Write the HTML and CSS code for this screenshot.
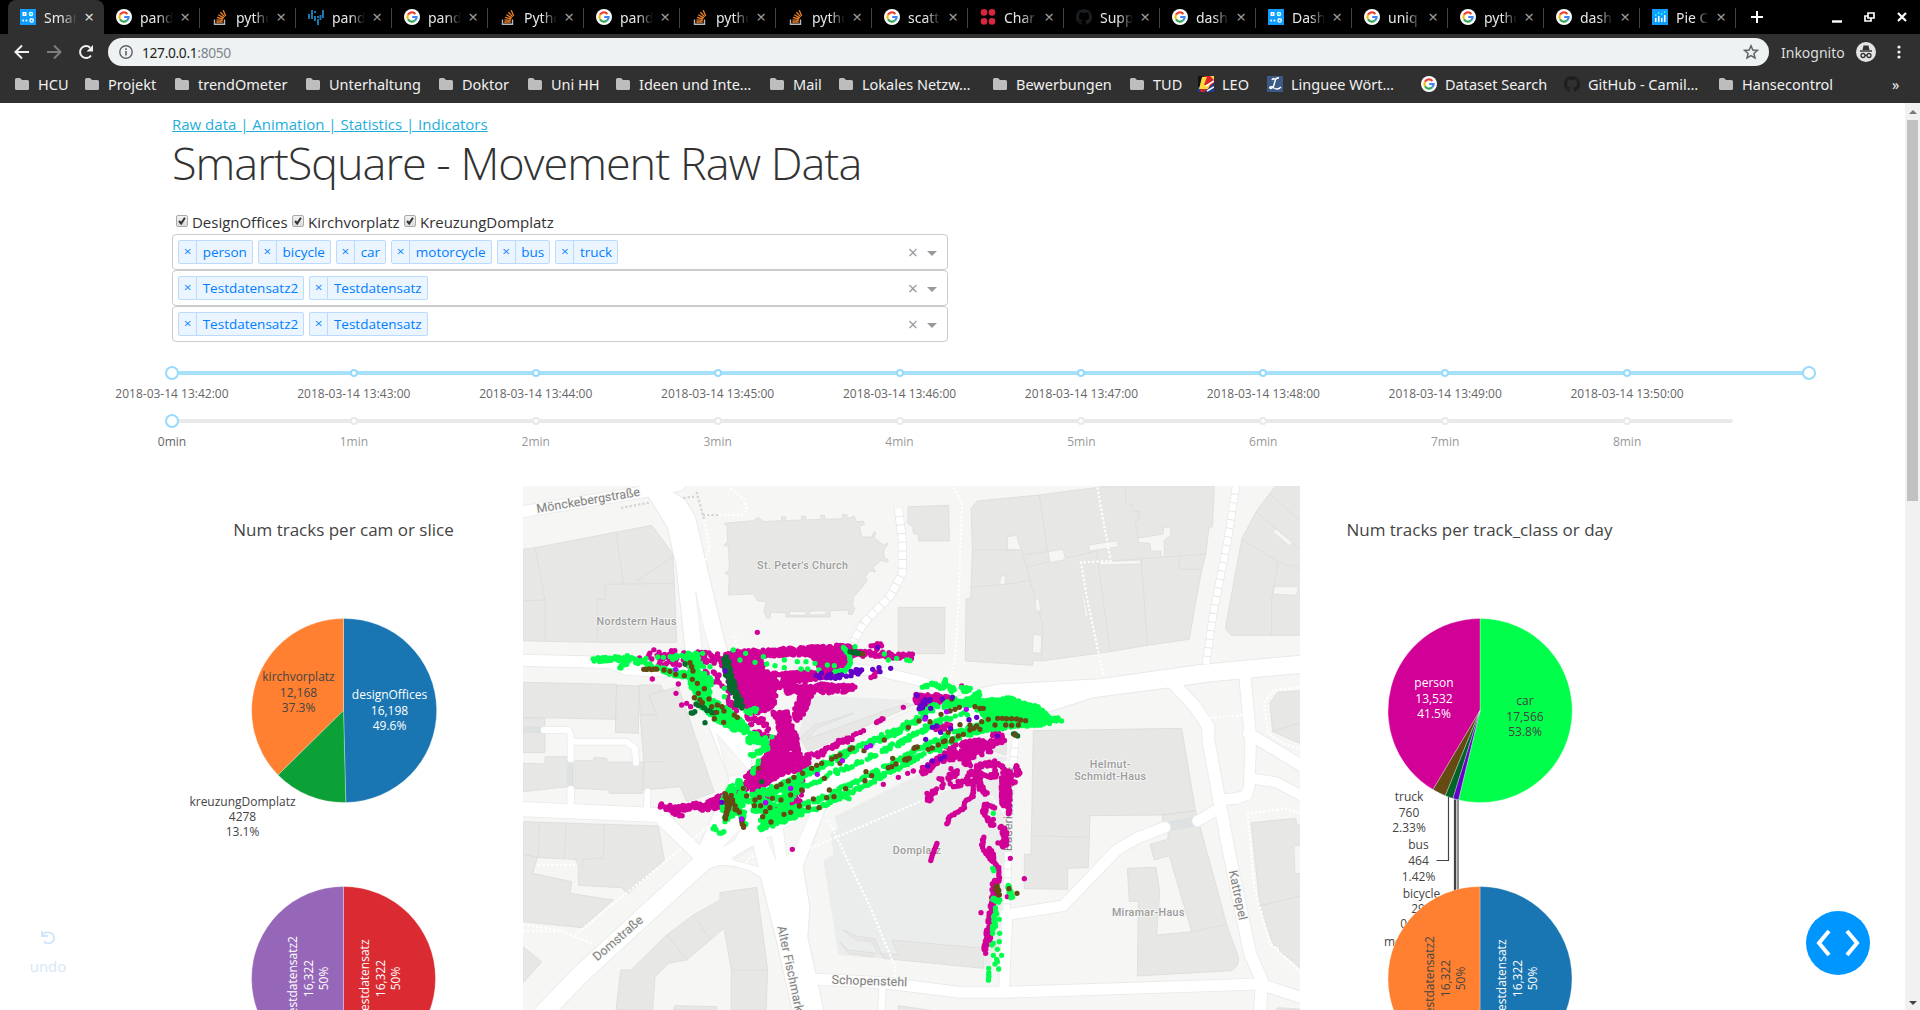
FILE: index.html
```html
<!DOCTYPE html>
<html lang="en">
<head>
<meta charset="utf-8">
<title>SmartSquare</title>
<link rel="stylesheet" href="styles.css">
</head>
<body>
<svg class="defs" aria-hidden="true">
  <symbol id="google" viewBox="0 0 16 16"><circle cx="8" cy="8" r="8" fill="#fff"/><g fill="none" stroke-width="2.2"><path d="M11.4 4.9A4.6 4.6 0 0 0 4 5.8" stroke="#ea4335"/><path d="M4 5.8a4.6 4.6 0 0 0 0 4.5" stroke="#fbbc05"/><path d="M4 10.3a4.6 4.6 0 0 0 7.2 1" stroke="#34a853"/><path d="M11.2 11.3A4.6 4.6 0 0 0 12.6 8H8.2" stroke="#4285f4"/></g></symbol>
  <symbol id="stack" viewBox="0 0 16 16"><path d="M2.500 10.500v4.700h10v-4.700" fill="none" stroke="#bcbbbb" stroke-width="1.400"/><g stroke="#f48024" stroke-width="1.300"><path d="M4.300 13h6.400M4.400 10.800l6.300.6M5 8.300l6.100 1.700M6.300 5.700l5.500 3.200M8.400 3.200l4.300 4.700M11.200 1.200l2.500 5.900"/></g></symbol>
  <symbol id="pandas" viewBox="0 0 16 16"><g fill="#1b78ac"><path d="M0 5h2v5H0zM3 1h2v9H3zM6 7h2v5H6zM6 2h2v2H6zM9 10h2v6H9zM9 7h2v2H9zM11.500 6h2v5h-2zM14 1h2v8h-2z"/></g></symbol>
  <symbol id="dash" viewBox="0 0 16 16"><path d="M0 0h16v16H0z" fill="#119dff"/><g fill="#fff"><path d="M2.500 3h4v4h-4z"/><circle cx="11" cy="5" r="2.300"/><circle cx="3.200" cy="11.500" r="1"/><circle cx="6.500" cy="11.500" r="1"/><circle cx="11.600" cy="11.400" r="2.300"/></g><circle cx="11" cy="5" r="1.300" fill="#25fefd"/><circle cx="11.600" cy="11.400" r="1" fill="#119dff"/><path d="M4 4.400h1v1.200H4z" fill="#119dff"/></symbol>
  <symbol id="plotly" viewBox="0 0 16 16"><path d="M0 0h16v16H0z" fill="#119dff"/><path d="M3 9h1.500v4H3zM6 7h1.500v6H6zM9 9h1.500v4H9zM12 6h1.500v7H12z" fill="#fff"/><g fill="#25fefd"><circle cx="3.700" cy="6" r=".9"/><circle cx="6.700" cy="4" r=".9"/><circle cx="9.700" cy="5" r=".9"/><circle cx="12.700" cy="3" r=".9"/></g></symbol>
  <symbol id="reddots" viewBox="0 0 16 16"><g fill="#d6273f"><circle cx="4" cy="3.400" r="3.300"/><circle cx="12" cy="3.400" r="3.300"/><circle cx="4" cy="12.400" r="3.300"/><circle cx="12" cy="12.400" r="3.300"/></g></symbol>
  <symbol id="github" viewBox="0 0 16 16"><path fill="#1b1f22" d="M8 0C3.58 0 0 3.58 0 8c0 3.54 2.29 6.53 5.47 7.59.4.07.55-.17.55-.38v-1.49c-2.01.37-2.53-.49-2.69-.94-.36-.9-.9-1.2-.9-1.2-.7-.5.1-.5.1-.5.8.1 1.2.8 1.2.8.72 1.21 1.87.87 2.33.66.07-.52.28-.87.51-1.07-1.78-.2-3.64-.89-3.64-3.95 0-.87.31-1.59.82-2.15-.08-.2-.36-1.02.08-2.12 0 0 .67-.21 2.2.82a7.6 7.6 0 0 1 4 0c1.53-1.04 2.2-.82 2.2-.82.44 1.1.16 1.92.08 2.12.51.56.82 1.27.82 2.15 0 3.07-1.87 3.75-3.65 3.95.29.25.54.73.54 1.48v2.2c0 .21.15.46.55.38A8 8 0 0 0 16 8c0-4.42-3.58-8-8-8z"/></symbol>
  <symbol id="folder" viewBox="0 0 16 16"><path d="M1 3.500Q1 2 2.500 2H6l2 2h5.500q1.500 0 1.500 1.500v7q0 1.500-1.500 1.500h-11Q1 14 1 12.500z" fill="#bdbdbd"/></symbol>
  <symbol id="leo" viewBox="0 0 16 16"><path d="M0 0h16v16H0z" fill="#1c3d94"/><path d="M0 0h9L2 11H0z" fill="#111"/><path d="M6 0h10v7L6 16H2z" fill="#d8232a"/><path d="M4 1h5L6 9h6l-2 4H1z" fill="#ffd83b"/><path d="M8 10l8-5M9 15l7-4" stroke="#fff" stroke-width="1.500"/><path d="M12 0h4v4z" fill="#ffd83b"/></symbol>
  <symbol id="linguee" viewBox="0 0 16 16"><path d="M0 0h16v16H0z" fill="#3d5a86"/><path d="M12 2C8 1 8 6 7 9s-3 4-4 3 1-2 4 0 5 1 7-1M5 4q1-2 3-1" fill="none" stroke="#fff" stroke-width="1.500"/></symbol>
</svg>

<header class="browser">
  <div class="tabs">
    <div class="tab active"><svg><use href="#dash"/></svg><span>Smart</span><i>×</i></div>
    <div class="tab"><svg><use href="#google"/></svg><span>panda</span><i>×</i></div>
    <div class="tab"><svg><use href="#stack"/></svg><span>pytho</span><i>×</i></div>
    <div class="tab"><svg><use href="#pandas"/></svg><span>panda</span><i>×</i></div>
    <div class="tab"><svg><use href="#google"/></svg><span>panda</span><i>×</i></div>
    <div class="tab"><svg><use href="#stack"/></svg><span>Pytho</span><i>×</i></div>
    <div class="tab"><svg><use href="#google"/></svg><span>panda</span><i>×</i></div>
    <div class="tab"><svg><use href="#stack"/></svg><span>pytho</span><i>×</i></div>
    <div class="tab"><svg><use href="#stack"/></svg><span>pytho</span><i>×</i></div>
    <div class="tab"><svg><use href="#google"/></svg><span>scatt</span><i>×</i></div>
    <div class="tab"><svg><use href="#reddots"/></svg><span>Char</span><i>×</i></div>
    <div class="tab"><svg><use href="#github"/></svg><span>Supp</span><i>×</i></div>
    <div class="tab"><svg><use href="#google"/></svg><span>dash</span><i>×</i></div>
    <div class="tab"><svg><use href="#dash"/></svg><span>Dash</span><i>×</i></div>
    <div class="tab"><svg><use href="#google"/></svg><span>uniq</span><i>×</i></div>
    <div class="tab"><svg><use href="#google"/></svg><span>pytho</span><i>×</i></div>
    <div class="tab"><svg><use href="#google"/></svg><span>dash</span><i>×</i></div>
    <div class="tab"><svg><use href="#plotly"/></svg><span>Pie C</span><i>×</i></div>
    <svg class="window" viewBox="0 0 184 34"><g stroke="#fff" fill="none" stroke-width="2"><path d="M21 11v12M15 17h12"/><path d="M96 21.500h10" stroke-width="2.400"/><path d="M132 13h6v5h-6zM132 16h-3v5h6v-3" stroke-width="1.700"/><path d="M162 13l8 8M170 13l-8 8" stroke-width="2.200"/></g></svg>
  </div>
  <div class="toolbar">
    <svg class="nav" viewBox="0 0 108 36"><g fill="none" stroke-width="2"><path d="M29 18H16M22 11.500L15.500 18l6.500 6.500" stroke="#f1f1f1"/><path d="M47 18h13M54 11.500l6.500 6.500-6.500 6.500" stroke="#7d7d7d"/><path d="M91 21.500a6 6 0 1 1-.8-7.800" stroke="#f1f1f1"/></g><path d="M93 11v6.500h-6.500z" fill="#f1f1f1"/></svg>
    <div class="omnibox">
      <svg width="14" height="14" viewBox="0 0 14 14"><circle cx="7" cy="7" r="6.200" fill="none" stroke="#5f6368" stroke-width="1.400"/><path d="M7 6v4.500M7 3.300V5" stroke="#5f6368" stroke-width="1.600"/></svg>
      <span class="url">127.0.0.1<em>:8050</em></span>
      <svg width="16" height="16" viewBox="0 0 16 16"><path d="M8 1.800l1.800 4.200 4.600.4-3.500 3 1.100 4.500L8 11.500l-4 2.400 1.100-4.500-3.500-3L6.200 6z" fill="none" stroke="#5f6368" stroke-width="1.500"/></svg>
    </div>
    <span class="incog">Inkognito</span>
    <svg width="20" height="20" viewBox="0 0 20 20"><circle cx="10" cy="10" r="10" fill="#e4e4e4"/><path d="M6.500 8l1-4.500h5l1 4.500zM4 8.300h12v1.400H4z" fill="#333"/><g fill="none" stroke="#333" stroke-width="1.300"><circle cx="7" cy="13.500" r="2"/><circle cx="13" cy="13.500" r="2"/><path d="M9 13.300h2"/></g></svg>
    <svg class="more" width="6" height="16" viewBox="0 0 6 16"><g fill="#f1f1f1"><circle cx="3" cy="3" r="1.600"/><circle cx="3" cy="8" r="1.600"/><circle cx="3" cy="13" r="1.600"/></g></svg>
  </div>
  <nav class="bookmarks">
    <a><svg><use href="#folder"/></svg>HCU</a>
    <a><svg><use href="#folder"/></svg>Projekt</a>
    <a><svg><use href="#folder"/></svg>trendOmeter</a>
    <a><svg><use href="#folder"/></svg>Unterhaltung</a>
    <a><svg><use href="#folder"/></svg>Doktor</a>
    <a><svg><use href="#folder"/></svg>Uni HH</a>
    <a><svg><use href="#folder"/></svg>Ideen und Inte…</a>
    <a><svg><use href="#folder"/></svg>Mail</a>
    <a><svg><use href="#folder"/></svg>Lokales Netzw…</a>
    <a><svg><use href="#folder"/></svg>Bewerbungen</a>
    <a><svg><use href="#folder"/></svg>TUD</a>
    <a><svg><use href="#leo"/></svg>LEO</a>
    <a><svg><use href="#linguee"/></svg>Linguee Wört…</a>
    <a><svg><use href="#google"/></svg>Dataset Search</a>
    <a><svg><use href="#github"/></svg>GitHub - Camil…</a>
    <a><svg><use href="#folder"/></svg>Hansecontrol</a>
    <a>»</a>
  </nav>
</header>

<div class="view">
<main>
  <div class="inset">
    <a class="links">Raw data | Animation | Statistics | Indicators</a>
    <h1>SmartSquare - Movement Raw Data</h1>
    <div class="checks">
      <label><svg class="box" viewBox="0 0 12 12"><path d="M2.500 6l2.500 3 4.500-7"/></svg>DesignOffices</label>
      <label><svg class="box" viewBox="0 0 12 12"><path d="M2.500 6l2.500 3 4.500-7"/></svg>Kirchvorplatz</label>
      <label><svg class="box" viewBox="0 0 12 12"><path d="M2.500 6l2.500 3 4.500-7"/></svg>KreuzungDomplatz</label>
    </div>
    <div class="select"><span class="tag"><b>×</b>person</span><span class="tag"><b>×</b>bicycle</span><span class="tag"><b>×</b>car</span><span class="tag"><b>×</b>motorcycle</span><span class="tag"><b>×</b>bus</span><span class="tag"><b>×</b>truck</span><i class="clear">×</i><i class="caret"></i></div>
    <div class="select"><span class="tag"><b>×</b>Testdatensatz2</span><span class="tag"><b>×</b>Testdatensatz</span><i class="clear">×</i><i class="caret"></i></div>
    <div class="select"><span class="tag"><b>×</b>Testdatensatz2</span><span class="tag"><b>×</b>Testdatensatz</span><i class="clear">×</i><i class="caret"></i></div>
  </div>
  <div class="sliders">
    <div class="slider range">
      <div class="rail"></div>
      <div class="marks">
        <div class="handle">2018-03-14 13:42:00</div><div>2018-03-14 13:43:00</div><div>2018-03-14 13:44:00</div><div>2018-03-14 13:45:00</div><div>2018-03-14 13:46:00</div><div>2018-03-14 13:47:00</div><div>2018-03-14 13:48:00</div><div>2018-03-14 13:49:00</div><div>2018-03-14 13:50:00</div><div class="handle end"></div>
      </div>
    </div>
    <div class="slider single">
      <div class="rail"></div>
      <div class="marks">
        <div class="handle">0min</div><div>1min</div><div>2min</div><div>3min</div><div>4min</div><div>5min</div><div>6min</div><div>7min</div><div>8min</div>
      </div>
    </div>
  </div>
  <div class="graphs">
    <svg class="pie" width="351" height="524" viewBox="172.500 486 351 524">
      <text class="heading" x="344" y="536">Num tracks per cam or slice</text>
      <g class="slices">
        <path fill="#1a76b2" d="M344 710.500V618.500A92 92 0 0 1 346.300 802.500z"/>
        <path fill="#ff8030" d="M344 710.500V618.500A92 92 0 0 0 278.500 775z"/>
        <path fill="#0ba137" d="M344 710.500L278.500 775A92 92 0 0 0 346.300 802.500z"/>
        <path fill="#db2b32" d="M344 978.500V886.500A92 92 0 0 1 344 1070.500z"/>
        <path fill="#9667b8" d="M344 978.500V886.500A92 92 0 0 0 344 1070.500z"/>
      </g>
      <text x="299" y="680.500">kirchvorplatz</text><text x="299" y="696.500">12,168</text><text x="299" y="711.500">37.3%</text>
      <g class="light"><text x="390" y="698.500">designOffices</text><text x="390" y="714.500">16,198</text><text x="390" y="729.500">49.6%</text></g>
      <text x="243" y="805.500">kreuzungDomplatz</text><text x="243" y="820.500">4278</text><text x="243" y="836">13.1%</text>
      <g class="light" transform="translate(297 978.500) rotate(-90)"><text>Testdatensatz2</text><text y="16">16,322</text><text y="31">50%</text></g>
      <g class="light" transform="translate(369 978.500) rotate(-90)"><text>Testdatensatz</text><text y="16">16,322</text><text y="31">50%</text></g>
    </svg>
    <svg class="map" width="777" height="524" viewBox="9 18 2331 1572">
      <g id="ground"></g>
      <g class="place">
        <text x="848" y="266">St. Peter's Church</text>
        <text x="350" y="434">Nordstern Haus</text>
        <text x="1191" y="1122">Domplatz</text>
        <text x="1771" y="863">Helmut-</text><text x="1771" y="901">Schmidt-Haus</text>
        <text x="1885" y="1309">Miramar-Haus</text>
      </g>
      <g class="street">
        <text transform="translate(207 73) rotate(-9.500)">Mönckebergstraße</text>
        <text transform="translate(302 1384) rotate(-41)">Domstraße</text>
        <text class="from" transform="translate(772 1340) rotate(78)">Alter Fischmarkt</text>
        <text transform="translate(1048 1515) rotate(2)">Schopenstehl</text>
        <text transform="translate(2142 1248) rotate(78)">Kattrepel</text>
        <text class="from" transform="translate(1475 1114) rotate(-89)">Buceriusstraße</text>
      </g>
      <g id="tracks"></g>
    </svg>
    <svg class="pie" width="605" height="524" viewBox="1300 486 605 524">
      <text class="heading" x="1479.500" y="536">Num tracks per track_class or day</text>
      <g class="slices">
        <path fill="#00ff4b" d="M1480 710.500V618.500A92 92 0 1 1 1458.500 799.900z"/>
        <path fill="#d10097" d="M1480 710.500V618.500A92 92 0 0 0 1433 789.600z"/>
        <path fill="#664a14" d="M1480 710.500L1433 789.600A92 92 0 0 0 1445.300 795.700z"/>
        <path fill="#006428" d="M1480 710.500L1445.300 795.700A92 92 0 0 0 1453 798.400z"/>
        <path fill="#6400c8" d="M1480 710.500L1453 798.400A92 92 0 0 0 1458.500 799.900z"/>
      </g>
      <path class="leader" d="M1448.500 797v63.500H1436.500M1454.500 799.500V900M1455.700 799.500V900M1458 800V900"/>
      <g class="light"><text x="1434" y="686.500">person</text><text x="1434" y="702.500">13,532</text><text x="1434" y="717.500">41.5%</text></g>
      <text x="1525" y="705">car</text><text x="1525" y="720.500">17,566</text><text x="1525" y="735.500">53.8%</text>
      <text x="1409" y="800.500">truck</text><text x="1409" y="816.500">760</text><text x="1409" y="831.500">2.33%</text>
      <text x="1418.500" y="848.500">bus</text><text x="1418.500" y="864.500">464</text><text x="1418.500" y="880.500">1.42%</text>
      <text x="1421.500" y="897.500">bicycle</text><text x="1421.500" y="912.500">296</text><text x="1420.500" y="928">0.907%</text>
      <text x="1415" y="945.500">motorcycle</text>
      <g class="slices">
        <path fill="#1a76b2" d="M1480 978.500V886.500A92 92 0 0 1 1480 1070.500z"/>
        <path fill="#ff8030" d="M1480 978.500V886.500A92 92 0 0 0 1480 1070.500z"/>
      </g>
      <g transform="translate(1433.500 978.500) rotate(-90)"><text>Testdatensatz2</text><text y="16">16,322</text><text y="31">50%</text></g>
      <g class="light" transform="translate(1505.500 978.500) rotate(-90)"><text>Testdatensatz</text><text y="16">16,322</text><text y="31">50%</text></g>
    </svg>
  </div>
  <div class="undo"><svg width="16" height="16" viewBox="0 0 16 16"><path d="M2 2v5h6M2 6.500C4 2 14 2 14 9c0 6-8 7-10 3" fill="none" stroke="#cfe5fb" stroke-width="1.800"/></svg><span>undo</span></div>
  <div class="debug"><svg width="44" height="28" viewBox="0 0 44 28"><path d="M13 2L3 14l10 12M31 2l10 12-10 12" fill="none" stroke="#fff" stroke-width="4"/></svg></div>
</main>
<aside class="scroll"><i class="up"></i><i class="thumb"></i><i class="down"></i></aside>
</div>
<script src="map.js"></script>
</body>
</html>
```
FILE: styles.css
```css
*, *::before { box-sizing: border-box; }
body { margin: 0; width: 1920px; height: 1010px; overflow: hidden; background: #fff; font-family: "Open Sans", sans-serif; color: #323232; }
i, em, b { font-style: normal; font-weight: normal; }
.defs { position: absolute; width: 0; height: 0; }

.browser { height: 103px; background: #303030; font-family: "Noto Sans", sans-serif; font-size: 14px; color: #f1f1f1; }
.tabs { display: flex; height: 34px; background: #000; padding-left: 8px; }
.tab { display: flex; align-items: center; width: 96px; padding-left: 12px; flex: none; }
.tab svg { width: 16px; height: 16px; margin-right: 8px; flex: none; }
.tab span { width: 33px; overflow: hidden; white-space: nowrap; color: #e8e8e8; -webkit-mask-image: linear-gradient(90deg, #000 55%, transparent); mask-image: linear-gradient(90deg, #000 55%, transparent); }
.tab i { width: 16px; margin-left: 4px; text-align: center; color: #999; font-size: 17px; line-height: 30px; }
.tab:not(.active) { background: linear-gradient(#444, #444) right 0 top 8px / 1px 20px no-repeat; }
.tab.active { background: #303030; border-radius: 8px 8px 0 0; }
.tab.active i { color: #ddd; }
.window { width: 184px; height: 34px; }
.toolbar { display: flex; align-items: center; height: 36px; }
.nav { width: 108px; height: 36px; }
.omnibox { display: flex; align-items: center; width: 1661px; height: 28px; padding: 0 10px 0 11px; border-radius: 14px; background: #eef2f3; }
.url { flex: 1; margin-left: 9px; color: #222; font-size: 13.8px; letter-spacing: -.35px; }
.url em { color: #80868b; }
.incog { width: 66px; margin: 0 9px 0 12px; color: #ddd; }
.more { margin-left: 20px; }
.bookmarks { display: flex; height: 30px; padding-left: 14px; align-items: center; font-size: 14.5px; }
.bookmarks a { display: flex; align-items: center; width: 70px; height: 28px; margin-bottom: 2px; flex: none; white-space: nowrap; }
.bookmarks svg { width: 16px; height: 16px; margin-right: 8px; flex: none; }
.bookmarks a:nth-child(2) { width: 90px; }
.bookmarks a:nth-child(3) { width: 131px; }
.bookmarks a:nth-child(4) { width: 133px; }
.bookmarks a:nth-child(5) { width: 89px; }
.bookmarks a:nth-child(6) { width: 88px; }
.bookmarks a:nth-child(7) { width: 154px; }
.bookmarks a:nth-child(8) { width: 69px; }
.bookmarks a:nth-child(9) { width: 154px; }
.bookmarks a:nth-child(10) { width: 137px; }
.bookmarks a:nth-child(11) { width: 69px; }
.bookmarks a:nth-child(12) { width: 69px; }
.bookmarks a:nth-child(13) { width: 154px; }
.bookmarks a:nth-child(14) { width: 143px; }
.bookmarks a:nth-child(15) { width: 154px; }
.bookmarks a:nth-child(16) { width: 174px; }
.bookmarks a:nth-child(17) { width: 20px; }

.view { display: flex; height: 907px; }
main { width: 1905px; padding-top: 9px; position: relative; }
.inset { width: 776px; margin-left: 172px; }
.links { display: block; line-height: 24px; font-size: 15px; color: #1eaedb; text-decoration: underline; }
h1 { margin: 0 0 21px; line-height: 53px; font-size: 45px; font-weight: 300; letter-spacing: -1px; white-space: nowrap; }
.checks { display: flex; height: 24px; padding-left: 4px; font-size: 15px; line-height: 24px; gap: 4.4px; }
.checks label { display: flex; letter-spacing: -.02px; }
.box { width: 12px; height: 12px; margin: 5px 4px 0 0; border: 1px solid #aaa; border-radius: 2px; background: linear-gradient(#f2f2f2, #dadada); }
.box path { fill: none; stroke: #333; stroke-width: 2.4; }
.select { display: flex; align-items: center; height: 36px; border: 1px solid #ccc; border-radius: 4px; padding-left: 5px; gap: 5px; font-size: 13.5px; }
.tag { display: flex; height: 24px; border: 1px solid #bcdafd; border-radius: 2px; background: #ebf5ff; color: #007eff; padding-right: 5px; line-height: 23px; }
.tag b { width: 18px; margin-right: 5.7px; border-right: 1px solid #bcdafd; text-align: center; line-height: 21px; }
.clear { margin-left: auto; color: #999; font-size: 18px; line-height: 30px; }
.caret { border: 5px solid transparent; border-top-color: #999; border-bottom: 0; margin: 3px 10px 0 4px; }

.sliders { margin: 24px 0 24px 172px; }
.slider { display: grid; height: 48px; width: 1637px; --c: #e9e9e9; --w: 1561px; color: #999; font-size: 12px; }
.range { --c: #a6e1f9; --w: 1637px; color: #666; }
.rail { grid-area: 1 / 1; width: var(--w); height: 4px; margin-top: 5px; background: var(--c); border-radius: 2px; }
.marks { grid-area: 1 / 1; display: flex; margin-left: -91px; }
.marks div { width: 181.9px; flex: none; text-align: center; line-height: 22px; z-index: 1; }
.marks div::before { content: ""; display: block; width: 8px; height: 8px; margin: 3px auto 6px; border: 2px solid #e9e9e9; border-radius: 50%; background: #fff; }
.range .marks div::before { border-color: #96dbfa; }
.marks .handle { color: #666; }
.marks .handle::before, .range .marks .handle::before { width: 14px; height: 14px; margin: 0 auto 3px; border: 2px solid #96dbfa; }

.graphs { display: flex; padding-left: 172px; }
.graphs svg { flex: none; display: block; }
.pie text { font-size: 12px; fill: #444; text-anchor: middle; }
.pie .light text { fill: #fff; }
.pie .heading { font-size: 17px; }
.slices path { stroke: #fff; stroke-width: .3; }
.leader { fill: none; stroke: #444; stroke-width: 1.2; }
.map { background: #f6f6f4; }
.map text { font-family: Roboto, sans-serif; font-weight: 500; text-anchor: middle; paint-order: stroke; stroke: #f6f6f4; stroke-width: 5px; }
.map .from { text-anchor: start; }
.map .place text { font-size: 32px; fill: #9c9c9c; letter-spacing: 1.1px; }
.map .street text { font-size: 37px; fill: #808080; font-weight: 400; letter-spacing: .3px; }

.undo { position: absolute; left: 30px; top: 826px; width: 36px; display: flex; flex-direction: column; align-items: center; gap: 9px; color: #d5e7f9; font-size: 15px; line-height: 24px; }
.debug { position: absolute; left: 1806px; top: 808px; width: 64px; height: 64px; border-radius: 50%; background: #0096ff; display: flex; align-items: center; justify-content: center; }
.scroll { width: 15px; background: #f1f1f1; display: flex; flex-direction: column; align-items: center; }
.up { margin: 7px 0 6px; border: 4px solid transparent; border-top: 0; border-bottom-color: #777; }
.thumb { width: 11px; height: 381px; background: #c1c1c1; }
.down { margin: auto 0 5px; border: 4px solid transparent; border-bottom: 0; border-top-color: #444; }
```
FILE: map.js
```js
// Base map geometry and track points. Units are thirds of a pixel.
// Offsets of the four map quarters.
const A = [0, 0], B = [1140, 0], C = [0, 780], D = [1140, 780];
const NS = 'http://www.w3.org/2000/svg';
const ground = document.getElementById('ground');
const pairs = (q, s) => s.trim().split(/\s+/).map(p => { const [x, y] = p.split(',').map(Number); return [x + q[0], y + q[1]]; });
function add(parent, d, attrs) {
  const e = document.createElementNS(NS, 'path');
  e.setAttribute('d', d);
  for (const k in attrs) e.setAttribute(k, attrs[k]);
  parent.appendChild(e);
}
const toPath = (q, s, close) => 'M' + pairs(q, s).map(p => p.join(' ')).join('L') + (close ? 'Z' : '');
const fill = (q, c, s, stroke) => add(ground, toPath(q, s, true), { fill: c, stroke: stroke || 'none', 'stroke-width': 2.5 });
const BUILD = '#e7e7e6', EDGE = '#dcdcdb', LAND = '#f6f6f4';

// plaza
fill(A, '#ebedec', '870,645 1165,660 880,790 830,780');
fill(A, '#ebedec', '943,1010 1300,830 1460,830 1458,980 1440,1400 1405,1463 955,1425 910,1140 940,1125 932,1060 955,1045');
fill(C, BUILD, '970,570 1010,588 1065,597 1090,655 1390,685 1390,625 1115,600 1135,645 1075,640 1055,605 1010,600', EDGE);
fill(C, BUILD, '958,605 985,630 1070,640 1060,650 985,640', EDGE);

// buildings
[
  [A, '9,208 45,203 285,157 395,136 458,220 463,310 470,487 232,487 76,484 9,482'],
  [A, '612,130 700,122 715,112 730,125 785,122 785,110 797,110 797,122 845,120 845,108 857,108 857,120 902,118 902,106 914,106 914,118 968,116 968,104 980,104 982,116 1003,108 1008,125 1030,124 1034,132 1018,140 1026,170 1055,172 1062,155 1068,158 1062,173 1090,195 1103,189 1100,200 1092,207 1092,232 1106,240 1100,247 1085,240 1060,262 1066,276 1050,272 1035,290 1042,300 1028,320 1000,352 998,378 1005,385 997,403 985,403 985,390 930,392 930,411 798,411 798,398 752,397 750,414 740,414 732,395 738,365 712,362 700,342 625,345 628,285 615,280 628,270 626,200 612,195 622,185 622,140'],
  [A, '1165,80 1286,76 1288,183 1195,183 1195,165 1180,160 1178,140 1163,130'],
  [A, '1135,382 1275,382 1273,521 1135,521'],
  [A, '9,607 290,613 286,718 9,712'], [A, '290,615 357,618 355,760 286,757'],
  [A, '357,615 422,615 430,630 387,645 410,705 360,705'],
  [A, '387,645 475,620 583,937 500,965 480,920 370,930 372,848 360,705 410,705'],
  [A, '9,715 75,715 75,818 9,818'],
  [C, '75,50 142,50 142,140 9,155 9,70 75,72'], [C, '165,62 220,62 222,52 260,55 262,66 370,66 368,160 268,160 265,150 165,145'],
  [C, '9,245 415,258 433,360 323,463 305,443 175,436 175,375 165,358 55,353 9,343'],
  [C, '9,343 52,353 38,400 155,425 150,460 280,480 187,563 9,545'], [C, '9,620 65,665 9,728'],
  [C, '600,458 710,442 743,690 738,810 633,810 634,690 612,565 500,660 445,670 405,710 398,810 288,810 302,690 333,690 440,585 520,525 600,480'],
  [C, '460,810 465,797 590,800 590,810'],
  [B, '213,85 232,63 418,45 595,22 620,18 943,18 937,140 927,142 917,225 905,270 885,380 868,478 742,496 630,515 425,543 400,541 398,556 196,543 198,357 212,355 217,212'],
  [B, '1128,16 1210,16 1210,466 993,466 976,445 1025,178 1068,95'],
  [B, '1110,668 1133,637 1210,632 1210,795 1118,755'],
  [B, '400,752 845,745 887,995 790,1005 570,1007 565,1163 503,1165 503,1228 373,1226 373,1123 393,1123'],
  [B, '270,790 320,780 318,825 275,812'],
  [D, '787,225 887,212 980,553 1016,655 1013,675 995,692 712,708 715,483 688,485 682,385 768,382 779,455 770,585 875,575 808,347 763,360 750,313 803,298 805,275 790,270'],
  [D, '1053,248 1187,235 1190,255 1210,255 1210,695 1180,665 1140,635 1138,620 1120,615 1080,500'],
  [D, '-5,797 100,812 -5,812'], [D, '1125,812 1135,803 1205,808']
].forEach(([q, s]) => fill(q, BUILD, s, EDGE));

// building seams
[
  [A, '45,203 75,360 9,362'], [A, '75,360 76,484'], [A, '288,157 311,312'], [A, '344,308 460,230'],
  [A, '463,310 256,313 256,358 232,358 232,487'], [B, '418,45 443,215 370,224'],
  [B, '217,210 365,210 390,300 405,355 428,430 425,540'], [B, '212,322 345,310 390,300'],
  [B, '382,260 590,213 630,515'], [B, '724,240 742,496'], [B, '632,243 917,222'],
  [B, '675,18 680,73 697,75 700,92 718,95 716,120 705,122 715,180'], [B, '838,232 838,268 905,268'],
  [B, '1110,42 1210,130'], [B, '1068,95 1210,215'], [B, '1025,178 1135,245 1168,262 1180,255 1210,275'],
  [B, '1135,245 1115,355 1115,466'], [B, '1118,755 1210,725'], [D, '400,287 565,292'], [D, '887,212 790,225'],
  [D, '875,575 980,553'], [D, '1080,498 1210,465'], [C, '520,525 570,598'], [C, '440,585 500,660'],
  [C, '634,690 743,690'], [C, '58,250 55,353'], [C, '138,250 133,355'], [C, '253,252 250,355 188,358 188,380'],
  [C, '370,66 435,65']
].forEach(([q, s]) => add(ground, toPath(q, s), { fill: 'none', stroke: EDGE, 'stroke-width': 2.5 }));

// courtyards
[
  [A, '808,395 857,394 857,406 808,406'], [A, '868,394 917,392 917,404 868,405'],
  [B, '322,170 350,166 355,188 364,210 322,208'], [B, '445,215 488,208 497,238 450,248'],
  [B, '565,195 652,182 655,200 568,213'], [B, '598,245 722,240 722,252 600,255'],
  [B, '714,175 790,162 790,142 812,142 812,166 793,180 793,230 783,230 783,213 752,213 750,190 716,187'],
  [B, '303,288 318,288 315,314 298,312'], [B, '405,356 418,358 422,394 408,392'],
  [B, '400,463 425,466 423,520 397,518'], [B, '545,338 550,338 565,410 555,410'],
  [B, '1118,155 1128,147 1178,188 1168,197'], [B, '1122,320 1195,320 1190,346 1125,342 1118,355'],
  [D, '1182,318 1210,315 1210,400 1185,400']
].forEach(([q, s]) => fill(q, LAND, s, '#dfdfde'));

// roads: outlines first, then white surfaces
const areas = [
  [A, '350,10 383,45 443,140 470,260 498,520 510,590 630,900 600,960 520,1140 565,1165 600,1155 700,1095 722,1190 770,1380 820,1600 912,1600 862,1370 868,1280 848,1160 920,975 1040,920 1440,740 1600,690 1720,652 1950,622 2060,605 2350,578 2350,526 2040,555 1740,598 1430,614 1350,632 1140,740 860,880 690,870 700,780 630,540 612,480 560,260 525,110 495,60 460,38 480,10']
];
const roads = [
  [A, 33, '-10,98 380,34 480,15'], [C, 54, '55,835 185,700 550,365 700,285'], [C, 22, '590,362 650,368 690,380 735,405'],
  [C, 42, '0,207 415,225 550,355'], [A, 34, '0,541 270,547 320,568 520,577'], [A, 28, '940,560 1080,575 1200,603 1300,640'],
  [B, 36, '820,610 885,680 925,740 925,780 965,1000 1000,1180 1050,1420 1085,1500 1080,1600'],
  [B, 34, '1035,590 1052,780'], [D, 32, '1052,-5 1048,140 1040,165 1010,175 955,180'],
  [D, 34, '1045,-20 1210,80'], [D, 30, '1055,115 1130,127 1210,170'],
  [D, 32, '315,525 490,497 650,330 710,295 795,262'], [D, 32, '893,243 955,207'],
  [D, 33, '-260,717 -50,728 180,757 310,757 1080,732 1210,775'], [D, 30, '322,515 312,750'],
  [C, 20, '1087,740 1085,820'], [A, 18, '72,750 145,750 152,765 152,838'], [C, 18, '152,5 320,5 345,25 348,68'],
  [C, 20, '152,148 152,195'], [C, 18, '383,155 380,205']
];
add(ground, toPath(D, '790,263 895,243'), { stroke: '#dde1e2', 'stroke-width': 30 });
add(ground, toPath(A, '9,748 75,750'), { stroke: '#dde1e2', 'stroke-width': 20 });
add(ground, toPath(C, '152,55 152,150'), { stroke: '#dde1e2', 'stroke-width': 20 });
const line = (c, w, d) => add(ground, d, { fill: 'none', stroke: c, 'stroke-width': w, 'stroke-linecap': 'round', 'stroke-linejoin': 'round' });
areas.forEach(([q, s]) => line('#e6ebea', 6, toPath(q, s, true)));
roads.forEach(([q, w, s]) => line('#e6ebea', w + 5, toPath(q, s)));
areas.forEach(([q, s]) => fill(q, '#fff', s));
roads.forEach(([q, w, s]) => line('#fff', w, toPath(q, s)));
// traffic islands
[
  [A, '527,335 545,420 605,640 640,760 620,740 560,600 545,500'],
  [C, '640,360 700,325 715,380 680,370'], [C, '740,292 755,290 768,360'], [C, '790,265 870,222 822,330 800,350'],
  [C, '590,-20 690,95 625,110'], [C, '610,320 660,268 645,300'],
  [A, '1180,640 1140,680 960,770 940,790 1180,690']
].forEach(([q, s]) => fill(q, LAND, s, '#e9eeed'));
fill(A, BUILD, '840,775 885,735 1000,700 890,745 860,778 1160,668 1180,675 865,815', EDGE);

// paved footways drawn as blocks
[
  [A, 22, '1135,85 1147,180 1147,280 1110,350 1030,430 1000,485'],
  [B, 20, '1008,18 985,170 940,400 918,552'], [D, 20, '346,0 328,200 320,510']
].forEach(([q, w, s]) => {
  const d = toPath(q, s);
  add(ground, d, { fill: 'none', stroke: '#e3e8e7', 'stroke-width': w + 4 });
  add(ground, d, { fill: 'none', stroke: '#fff', 'stroke-width': w, 'stroke-dasharray': '23 3' });
});
// dotted footpaths
[
  [A, '630,25 675,60 680,90 665,105 550,105'], [A, '552,120 568,200 555,245'], [A, '640,468 655,500'],
  [B, '160,22 186,70 175,380 165,540 150,600'], [B, '592,22 632,243 543,247 560,350 600,540 612,590'],
  [B, '930,713 1030,705'], [B, '1210,620 1120,630 1092,670 1105,760 1150,790 1210,810'],
  [A, '870,1105 1200,965 1460,845'], [C, '925,240 1050,500 1125,680 1125,710'], [C, '165,585 590,240'],
  [C, '9,555 115,570 215,610'], [C, '9,573 115,575'], [C, '55,375 165,375'], [C, '680,370 690,350 740,345'],
  [D, '240,130 315,220'], [D, '1210,225 1160,205 1043,220 1062,440 1110,610 1210,705']
].forEach(([q, s]) => add(ground, toPath(q, s), { fill: 'none', stroke: '#fff', 'stroke-width': 6.5, 'stroke-dasharray': '7 6' }));
[[A, '530,35 552,118'], [A, '548,105 600,105'], [A, '303,84 392,67'], [A, '490,54 530,49']]
  .forEach(([q, s]) => add(ground, toPath(q, s), { fill: 'none', stroke: '#d4d4d3', 'stroke-width': 6.5, 'stroke-dasharray': '7 6' }));

// tracks
let seed = 7;
const rnd = () => (seed = (seed * 16807) % 2147483647) / 2147483647;
let dots = [];
const dot = (x, y) => dots.push('M' + x.toFixed(1) + ' ' + y.toFixed(1) + 'h0');
const spots = (q, s) => pairs(q, s).forEach(p => dot(...p));
function trail(q, n, jitter, s) {
  const p = pairs(q, s), len = [];
  let sum = 0;
  for (let i = 1; i < p.length; i++) len.push(sum += Math.hypot(p[i][0] - p[i - 1][0], p[i][1] - p[i - 1][1]));
  for (let k = 0; k < n; k++) {
    const t = (jitter > 3 ? rnd() : k / (n - 1 || 1)) * sum;
    let i = len.findIndex(l => l >= t - 1e-6); if (i < 0) i = len.length - 1;
    const start = i ? len[i - 1] : 0, f = (t - start) / (len[i] - start);
    dot(p[i][0] + (p[i + 1][0] - p[i][0]) * f + (rnd() - .5) * 2 * jitter, p[i][1] + (p[i + 1][1] - p[i][1]) * f + (rnd() - .5) * 2 * jitter);
  }
}
function region(q, n, s) {
  const p = pairs(q, s), xs = p.map(a => a[0]), ys = p.map(a => a[1]);
  const x0 = Math.min(...xs), x1 = Math.max(...xs), y0 = Math.min(...ys), y1 = Math.max(...ys);
  for (let k = 0, guard = 0; k < n && guard < 20000; guard++) {
    const x = x0 + rnd() * (x1 - x0), y = y0 + rnd() * (y1 - y0);
    let inside = false;
    for (let i = 0, j = p.length - 1; i < p.length; j = i++)
      if ((p[i][1] > y) !== (p[j][1] > y) && x < (p[j][0] - p[i][0]) * (y - p[i][1]) / (p[j][1] - p[i][1]) + p[i][0]) inside = !inside;
    if (inside) { dot(x, y); k++; }
  }
}
function flush(color) {
  add(document.getElementById('tracks'), dots.join(''), { fill: 'none', stroke: color, 'stroke-width': 16, 'stroke-linecap': 'round' });
  dots = [];
}

// person
region(A, 420, '625,515 960,495 1005,500 1000,535 900,545 860,525 720,530 625,545');
region(A, 560, '645,545 720,530 745,580 770,620 765,675 735,692 690,695 650,655');
region(A, 190, '880,510 985,515 985,555 900,575');
region(A, 150, '740,580 860,572 960,580 900,597 850,602 760,630');
region(A, 130, '790,620 870,610 1000,616 1015,620 980,638 800,640');
region(A, 90, '845,635 882,635 842,720 825,722 822,690');
region(A, 150, '755,690 800,690 820,740 832,770 838,830 780,830 770,740');
region(C, 480, '755,-10 790,0 790,45 860,50 870,70 850,90 780,105 700,160 672,110 720,70 745,30');
trail(C, 30, 4, '800,5 830,15 838,50'); trail(C, 60, 9, '422,200 480,205 525,195 545,205'); trail(C, 10, 5, '455,215 485,228');
region(C, 150, '545,195 610,160 690,120 680,150 600,205 560,210');
region(C, 60, '800,125 850,120 845,175 820,235 800,190');
region(C, 40, '700,100 760,190 800,240 760,230');
trail(A, 95, 22, '370,530 480,535 620,540'); trail(A, 26, 22, '520,570 620,610'); trail(A, 45, 16, '625,545 640,690');
trail(A, 34, 24, '690,690 740,760'); trail(A, 60, 9, '1000,520 1090,525 1180,530'); trail(A, 10, 8, '1055,505 1080,495');
trail(A, 6, 5, '1045,595 1075,578'); trail(A, 13, 2, '905,812 1030,752'); trail(A, 6, 2, '1070,728 1090,715');
trail(C, 26, 10, '850,60 890,45 1000,-10'); spots(A, '712,457 397,597 475,612 468,640 485,675 500,670 512,680 1150,682');
spots(C, '817,328 1090,133 1135,112 1163,100 1180,93');
region(B, 90, '42,642 150,645 135,660 80,690 45,665'); trail(B, 16, 9, '95,742 150,738'); spots(B, '10,682 132,620 185,618');
region(B, 110, '135,800 230,775 285,785 275,815 200,840 130,840'); trail(B, 16, 9, '285,760 310,778');
trail(D, 120, 10, '68,95 120,60 200,35 285,8'); trail(D, 50, 10, '180,20 240,20 310,-5'); trail(D, 26, 8, '175,40 210,75');
trail(D, 42, 8, '80,190 88,165 130,135 185,130 240,120'); trail(D, 16, 7, '115,125 170,100'); spots(D, '153,86 172,92');
trail(D, 60, 8, '200,110 235,80 290,70 335,112'); trail(D, 34, 8, '232,90 235,125 258,165');
trail(D, 30, 7, '215,100 275,108 300,90'); trail(D, 10, 3, '218,130 218,168');
region(D, 170, '303,110 330,110 330,200 305,200'); trail(D, 9, 4, '322,190 330,228'); trail(D, 15, 6, '348,80 355,105'); trail(D, 10, 5, '330,125 345,128');
trail(D, 20, 2, '218,170 198,180 192,205 148,230 140,253'); trail(D, 9, 1, '110,310 92,362');
trail(D, 28, 5, '255,192 252,225 268,248 288,258'); trail(D, 8, 4, '258,192 290,212'); spots(D, '280,238');
trail(D, 38, 7, '305,262 315,285 314,315 298,312'); trail(D, 34, 2, '250,290 246,322 265,350 297,385 297,425 285,428');
trail(D, 10, 3, '268,325 282,352'); trail(D, 85, 6, '283,425 280,470 270,540 265,600'); trail(D, 24, 5, '262,570 255,630'); spots(D, '331,355 373,416 243,518 257,640 322,470');
flush('#d10096');

// car
trail(A, 320, 8, '690,965 860,880 1000,808 1150,745 1240,682 1300,670 1440,665 1540,690');
trail(A, 170, 6, '700,990 860,917 1000,853 1140,788 1260,722 1380,690 1560,700');
trail(A, 210, 5, '720,1025 900,957 1040,890 1180,815 1300,757 1400,732 1580,722');
trail(A, 210, 6, '720,1045 900,980 1040,912 1180,838 1300,778 1400,745 1580,728');
region(A, 430, '1350,675 1480,652 1500,665 1560,680 1590,715 1590,735 1500,740 1400,735 1380,690');
trail(A, 14, 5, '1580,715 1632,720'); trail(A, 6, 3, '1210,620 1225,618'); trail(A, 12, 4, '1238,612 1270,625');
trail(A, 22, 6, '1270,602 1300,635 1300,660'); trail(A, 12, 8, '1325,625 1345,632'); trail(A, 30, 8, '1340,665 1380,642'); trail(A, 40, 8, '1380,670 1480,658');
region(C, 110, '605,165 655,115 675,135 680,170 660,215 620,240 605,225');
region(C, 170, '690,160 860,105 840,150 780,230 700,215');
trail(C, 24, 9, '660,180 672,270'); trail(C, 5, 5, '578,268 598,258'); trail(C, 4, 3, '600,280 614,278');
spots(C, '982,173 987,176 615,245'); trail(C, 60, 9, '720,262 840,215');
trail(A, 140, 7, '222,540 290,535 360,545 440,575 520,590'); trail(A, 8, 5, '298,562 320,552'); spots(A, '322,527 335,533 378,535 413,531 430,532');
trail(A, 20, 7, '455,532 520,532');
region(A, 380, '500,520 530,515 545,560 575,600 570,655 625,685 690,745 680,755 640,750 590,725 540,680 512,620');
trail(A, 14, 7, '680,697 710,690'); trail(A, 34, 12, '680,765 740,785'); trail(C, 24, 7, '680,5 750,-5'); trail(C, 22, 6, '695,45 745,22'); trail(C, 8, 4, '700,98 718,65');
trail(A, 36, 1, '970,502 988,525 992,550 975,572 945,575');
spots(A, '640,510 677,520 660,540 705,547 730,530 740,552 765,557 793,540 793,563 832,545 858,545 843,567 863,567 885,550 897,570 922,555 943,557 1005,500 1093,522 1105,540 1130,535 1160,540 1170,542 613,625 613,650 548,520 550,560 570,560');
spots(D, '280,220 278,385 281,392 120,32'); trail(D, 18, 4, '322,435 335,470'); trail(D, 14, 6, '280,477 300,485');
trail(D, 18, 5, '287,505 280,570'); spots(D, '298,538 278,580 299,580 298,605 280,610 276,615 292,628 280,646 305,646 290,658 292,665 285,672 296,687 266,685');
trail(D, 5, 1, '266,697 266,720');
flush('#00ff4c');

// bus
trail(A, 90, 9, '618,530 625,580 638,630 665,685'); trail(A, 7, 2, '990,515 1020,520'); trail(A, 4, 2, '512,700 523,697');
trail(A, 9, 3, '530,672 582,700'); spots(A, '555,728 495,552'); spots(C, '725,125'); trail(B, 4, 3, '340,762 350,765');
flush('#046b2c');

// truck
trail(A, 6, 1, '372,568 410,567');
spots(A, '432,570 450,574 467,583 493,587 510,548 515,560 519,573 517,598 532,610 553,626 535,640 523,653 540,660 547,668 567,657 575,680 590,697 592,675 606,680 612,693 583,716 611,727 643,705 652,712 1028,522');
spots(B, '155,657 123,703 150,693 165,688 178,682 225,680 240,685 250,685 57,723 90,725 180,734 210,735 230,738 245,725 265,718 293,715 307,715 320,716 335,716 350,717 362,720 377,722 285,735 317,735 335,736 355,735 210,750 222,745 240,748 190,763 175,768 145,757 157,777 135,783 115,795 50,802 25,742 345,765');
trail(C, 30, 3, '615,160 625,200 615,235'); trail(C, 10, 8, '625,165 650,200 660,215'); trail(C, 5, 2, '665,240 672,262');
spots(C, '716,85 670,145 680,168 705,180 703,197 718,172 757,175 783,180 812,165 722,197 750,203 737,215 728,230 753,246 792,223 812,217 838,198 865,202 897,203 880,177 920,173 928,150 942,170 977,146 1035,122 1038,95 1055,107 770,140 783,133 805,123 822,112 848,100 875,85 890,76 905,70 935,57 948,50 960,45 990,28 997,24 1032,32 1093,0 845,150 913,115 1118,55 1105,83 1115,80 1128,72 1160,60 1168,55 1185,22 960,70');
trail(D, 4, 2, '15,60 28,56'); spots(D, '42,25 52,21 85,28 97,24 115,15 130,5 155,3');
trail(D, 16, 4, '288,440 297,462'); spots(D, '327,446 351,460');
flush('#664a14');

// bicycle
trail(A, 26, 8, '890,585 960,588 1025,575'); trail(B, 14, 6, '55,685 90,655');
spots(A, '1073,502 1058,568 1077,563 1080,575 1112,565 615,573 1190,645');
spots(B, '52,647 92,685 127,657 157,652 77,712 97,742 110,738 152,746 122,757 77,778 207,719 230,712 292,768');
spots(D, '83,78 97,63 122,57 133,50'); spots(C, '605,187');
flush('#6400c8');

// motorcycle
spots(A, '467,568'); spots(B, '140,695 199,688 75,717'); spots(C, '1040,22 1052,17 967,62 892,103 812,145 737,188 665,237');
flush('#b000f5');
```
